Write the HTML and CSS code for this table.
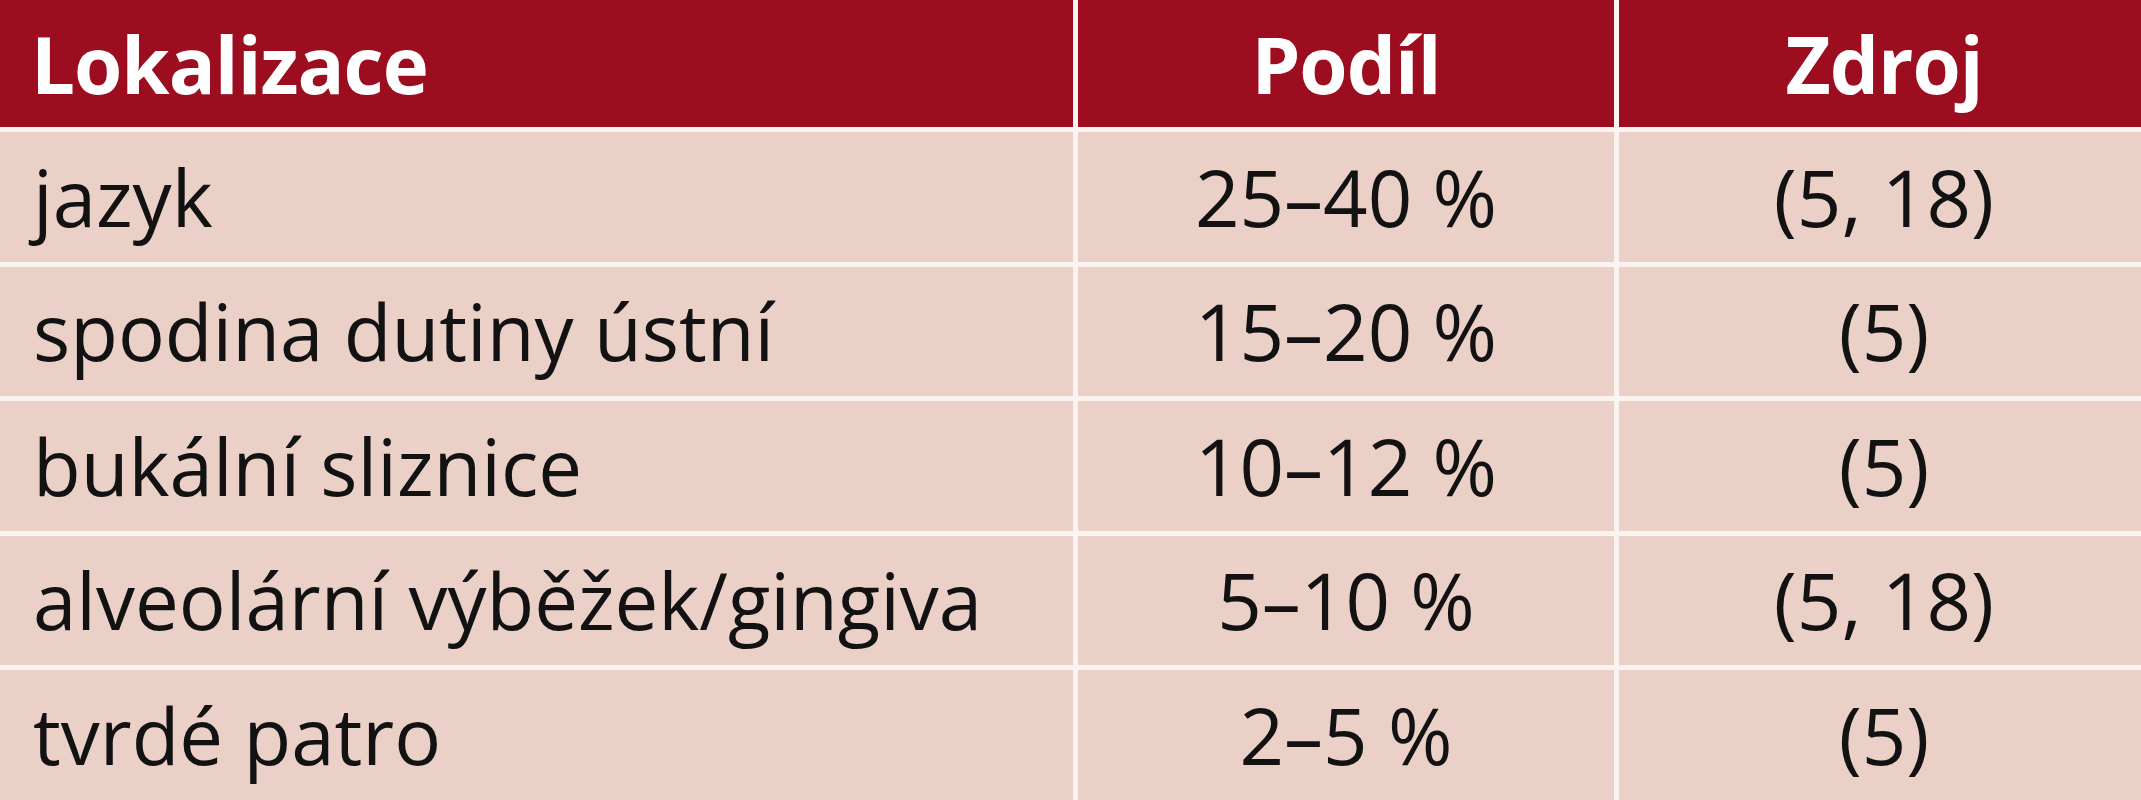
FILE: index.html
```html
<!DOCTYPE html>
<html lang="cs">
<head>
<meta charset="utf-8">
<title>Lokalizace</title>
<link rel="stylesheet" href="styles.css">
</head>
<body>
<div class="table">
  <div class="cell head left">Lokalizace</div>
  <div class="cell head">Podíl</div>
  <div class="cell head">Zdroj</div>

  <div class="cell left">jazyk</div>
  <div class="cell">25–40 %</div>
  <div class="cell">(5, 18)</div>

  <div class="cell left">spodina dutiny ústní</div>
  <div class="cell">15–20 %</div>
  <div class="cell">(5)</div>

  <div class="cell left">bukální sliznice</div>
  <div class="cell">10–12 %</div>
  <div class="cell">(5)</div>

  <div class="cell left">alveolární výběžek/gingiva</div>
  <div class="cell">5–10 %</div>
  <div class="cell">(5, 18)</div>

  <div class="cell left">tvrdé patro</div>
  <div class="cell">2–5 %</div>
  <div class="cell">(5)</div>
</div>
</body>
</html>
```
FILE: styles.css
```css
html, body {
  margin: 0;
  padding: 0;
  background: #fbf3ef;
  overflow: hidden;
}

body {
  width: 2141px;
  height: 800px;
}

.table {
  display: grid;
  grid-template-columns: 1073px 536px 530px;
  grid-template-rows: 127px repeat(5, 129.5px);
  gap: 5px;
  width: 2149px;
  font-family: "Open Sans", "Noto Sans", sans-serif;
  color: #121212;
}

.cell {
  background: #ebd0c8;
  display: flex;
  align-items: center;
  justify-content: center;
  font-size: 78px;
  line-height: 1.362;
  white-space: nowrap;
}

.cell.left {
  justify-content: flex-start;
  padding-left: 33px;
}

.cell.head {
  background: #9c0e1f;
  color: #ffffff;
  font-weight: 700;
  font-size: 78px;
  letter-spacing: -1px;
  padding-top: 2px;
}

.cell.head.left {
  padding-left: 31px;
}
```
